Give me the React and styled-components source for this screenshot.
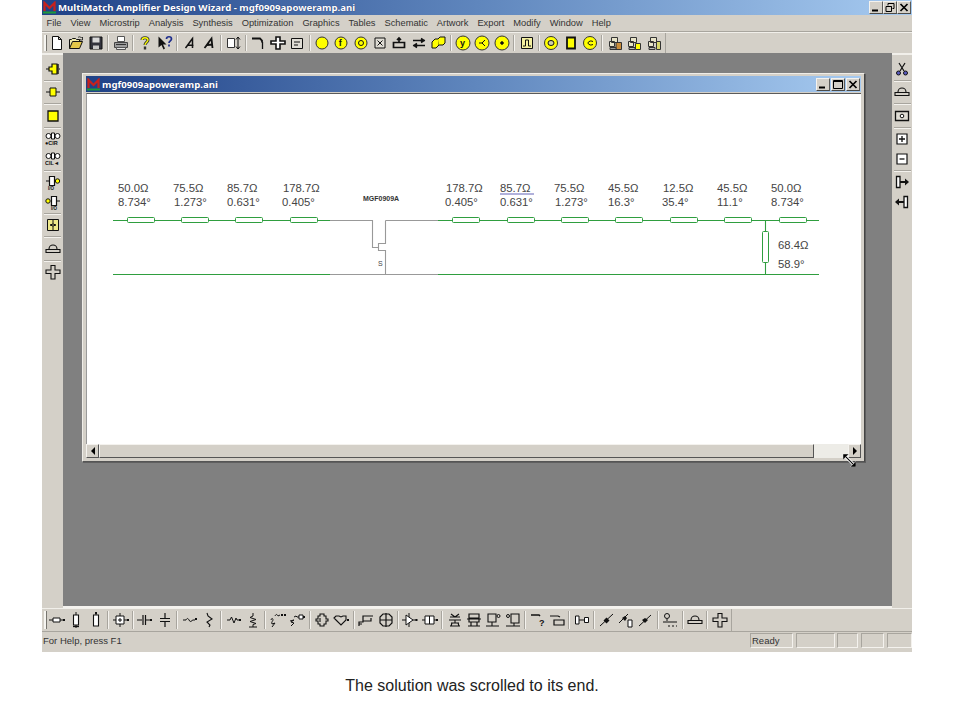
import React from "react";
import styled, { createGlobalStyle } from "styled-components";

const GlobalStyle = createGlobalStyle`
  html, body {
    margin: 0;
    padding: 0;
    background: #fff;
  }
`;

const Page = styled.div`
  width: 960px;
  height: 720px;
  overflow: hidden;
`;

const Frame = styled.div`
  width: 870px;
  height: 652px;
  margin-left: 42px;
  display: flex;
  flex-direction: column;
  background: #d4d0c8;
  font-family: "Liberation Sans", Arial, sans-serif;
  color: #222;
`;

const Caption = styled.p`
  margin: 26px 0 0;
  text-align: center;
  width: 944px;
  font: 16px/16px "Liberation Sans", Arial, sans-serif;
  color: #222;
`;

const TitleBar = styled.div`
  display: flex;
  align-items: center;
  flex: none;
  height: ${(p) => (p.$child ? 16 : 15)}px;
  padding: 0 1px 0 1px;
  background: linear-gradient(90deg, #1f4187 0%, #5f86bd 50%, #a6caf0 100%);
  color: #fff;
  font: bold 9.65px "Noto Sans", sans-serif;
  white-space: nowrap;
`;

const TitleText = styled.span`
  flex: 1;
  margin-left: 2px;
  text-shadow: 0 0 1px #1a2a60;
`;

const CaptionButtons = styled.div`
  display: flex;
  gap: ${(p) => (p.$gap ? p.$gap : 0)}px;
`;

const CaptionButton = styled.div`
  width: 14px;
  height: 13px;
  box-sizing: border-box;
  background: #d4d0c8;
  border: 1px solid;
  border-color: #f4f2ee #5a5a58 #4a4a48 #f4f2ee;
  display: flex;
  align-items: center;
  justify-content: center;
`;

const MenuBar = styled.div`
  display: flex;
  align-items: center;
  flex: none;
  height: 17px;
  padding-left: 0;
  border-bottom: 1px solid #a8a59e;
  box-sizing: border-box;
  font-size: 9.3px;
  color: #333;
`;

const MenuItem = styled.span`
  padding: 0 4.5px;
  white-space: nowrap;
`;

const HBar = styled.div`
  flex: none;
  height: ${(p) => p.$height}px;
  display: flex;
  align-items: center;
  box-sizing: border-box;
  border-top: 1px solid #f1efea;
`;

const HTools = styled.div`
  display: inline-flex;
  align-items: center;
  height: 100%;
  padding-left: 5.3px;
  padding-right: 2px;
  position: relative;
  border-right: 1px solid #a8a59e;
  &::before {
    content: "";
    position: absolute;
    left: 2px;
    top: 2px;
    bottom: 2px;
    width: 2px;
    background: #f6f5f1;
    border-right: 1px solid #77756f;
  }
`;

const VTools = styled.div`
  display: flex;
  flex-direction: column;
  align-items: center;
  padding-top: 4px;
  border-top: 2px solid #f1efea;
`;

const ToolBtn = styled.div`
  flex: none;
  width: ${(p) => (p.$vertical ? "100%" : "19.35px")};
  height: ${(p) => (p.$vertical ? "19.5px" : "19px")};
  display: flex;
  align-items: center;
  justify-content: center;
`;

const HSep = styled.div`
  flex: none;
  align-self: stretch;
  width: 1px;
  margin: 2px 1.75px;
  background: #a8a59e;
  border-right: 1px solid #f4f2ee;
`;

const VSep = styled.div`
  flex: none;
  width: 17px;
  height: 1px;
  margin: 1px 0;
  background: #a8a59e;
  border-bottom: 1px solid #f4f2ee;
`;

const Workspace = styled.div`
  flex: 1;
  min-height: 0;
  display: flex;
`;

const SideBar = styled.div`
  flex: none;
  width: ${(p) => p.$width}px;
  background: #d4d0c8;
`;

const MdiArea = styled.div`
  flex: 1;
  background: #808080;
  padding: 20px 27px 0 19px;
  border-bottom: 2px solid #f4f2ee;
  position: relative;
`;

const ChildWindow = styled.div`
  position: relative;
  height: 389px;
  box-sizing: border-box;
  display: flex;
  flex-direction: column;
  background: #d4d0c8;
  padding: 2px 3px 3px;
  border: 1px solid;
  border-color: #efede8 #444 #555 #efede8;
  box-shadow: 1px 1px 0 #5f5f5f;
`;

const Canvas = styled.div`
  flex: 1;
  min-height: 0;
  margin-top: 1px;
  background: #fff;
  border-top: 1px solid #5a5a5a;
  border-left: 1px solid #9a9a9a;
`;

const Schematic = styled.svg`
  display: block;
  width: 100%;
  height: 100%;
  font-family: "Liberation Sans", Arial, sans-serif;
`;

const Label = styled.text`
  font-size: 11.3px;
  fill: #444;
`;

const DeviceName = styled.text`
  font-size: 7px;
  font-weight: bold;
  fill: #333;
`;

const ScrollBar = styled.div`
  flex: none;
  height: 14px;
  display: flex;
  background: #edece7;
`;

const ScrollButton = styled.div`
  flex: none;
  width: 13px;
  box-sizing: border-box;
  background: #d4d0c8;
  border: 1px solid;
  border-color: #f4f2ee #555 #555 #f4f2ee;
  display: flex;
  align-items: center;
  justify-content: center;
`;

const ScrollThumb = styled.div`
  flex: none;
  width: 715px;
  box-sizing: border-box;
  background: #d4d0c8;
  border: 1px solid;
  border-color: #f4f2ee #555 #555 #f4f2ee;
`;

const ScrollSpacer = styled.div`
  flex: 1;
`;

const ArrowLeft = styled.div`
  border-style: solid;
  border-width: 4px 4px 4px 0;
  border-color: transparent #000 transparent transparent;
`;

const ArrowRight = styled.div`
  border-style: solid;
  border-width: 4px 0 4px 4px;
  border-color: transparent transparent transparent #000;
`;

const ResizeCursor = styled.svg`
  position: absolute;
  left: 760px;
  top: 380px;
  width: 13px;
  height: 13px;
`;

const StatusBar = styled.div`
  flex: none;
  height: 21px;
  box-sizing: border-box;
  display: flex;
  align-items: center;
  padding-bottom: 3px;
  border-top: 1px solid #a8a59e;
  font-size: 9.5px;
  color: #333;
`;

const StatusText = styled.span`
  flex: 1;
  padding-left: 1px;
`;

const StatusPane = styled.div`
  flex: none;
  width: ${(p) => p.$width}px;
  height: 15px;
  margin-left: ${(p) => p.$gap}px;
  box-sizing: border-box;
  padding-left: 1px;
  line-height: 13px;
  border: 1px solid;
  border-color: #a8a59e #f4f2ee #f4f2ee #a8a59e;
`;

const Logo = () => (
  <svg width="13" height="13" viewBox="0 0 13 13">
    <path d="M1.5 10V2L6.5 7L11.5 2V10" fill="none" stroke="#c8201c" strokeWidth="2.2" />
    <path d="M0 11.5h13" stroke="#1f9a3a" strokeWidth="2" />
  </svg>
);

const Min = () => (
  <svg width="10" height="9" viewBox="0 0 10 9">
    <path d="M1 7.5h6" stroke="#000" strokeWidth="2" />
  </svg>
);
const Restore = () => (
  <svg width="10" height="9" viewBox="0 0 10 9" fill="none" stroke="#000">
    <path d="M3 2.5V.5h6v5H7.5" />
    <path d="M1 3.5h5.5v5H1z M1 3.5h5.5" />
  </svg>
);
const Max = () => (
  <svg width="10" height="9" viewBox="0 0 10 9" fill="none" stroke="#000">
    <path d="M.5.5h9v8h-9z M.5 1.5h9" />
  </svg>
);
const CloseX = () => (
  <svg width="10" height="9" viewBox="0 0 10 9">
    <path d="M1.5 1l7 7M8.5 1l-7 7" stroke="#000" strokeWidth="1.7" />
  </svg>
);

const Y = "#ffff00";
const T = ({ x, y, s = 5, c, children }) => (
  <text x={x} y={y} fontSize={s} fill={c || "#111"} stroke="none" fontWeight="bold" fontFamily="Liberation Sans, sans-serif">
    {children}
  </text>
);
const Disc = ({ r = 6, children }) => (
  <>
    <circle cx="8" cy="8" r={r} fill={Y} stroke="#333" />
    {children}
  </>
);
const Dot = ({ x, y }) => <rect x={x} y={y} width="2" height="2" fill="#111" stroke="none" />;

const ICONS = {
  new: <path d="M3.5 1.5h6l3 3v10h-9z M9.5 1.5v3h3" fill="#fff" />,
  open: (
    <>
      <path d="M1.5 13.5v-9h2l1-1h3l1 1h3v2" fill="#efe9a8" />
      <path d="M1.5 13.5l3-7h10l-3 7z" fill="#e3c74a" />
      <path d="M10 2.5c1-1 2.500-1 3.500.5l1-1v3h-3l1-1" strokeWidth=".8" />
    </>
  ),
  save: (
    <>
      <path d="M2 2h12v12H2z" fill="#33333d" />
      <path d="M4.500 2.500h7v5h-7z" fill="#d8d8d8" stroke="none" />
      <path d="M5 10.500h6v3.500H5z" fill="#c8c8c8" stroke="none" />
    </>
  ),
  print: (
    <>
      <path d="M4.500 1.500h7v5h-7z" fill="#fff" stroke="#555" />
      <path d="M1.500 7.500h13v5h-13z" fill="#9c9c9c" stroke="#444" />
      <path d="M3.500 12.500h9v2h-9z" fill="#e8e8e8" stroke="#555" />
      <path d="M3 9.500h10" stroke="#333" />
    </>
  ),
  help: (
    <>
      <path d="M5 5c0-3 6-3 6 0 0 2-3 2.500-3 5" fill="none" stroke="#333" strokeWidth="3" />
      <path d="M5 5c0-3 6-3 6 0 0 2-3 2.500-3 5" fill="none" stroke={Y} strokeWidth="1.300" />
      <path d="M8 11.500v3" stroke="#333" strokeWidth="2.400" />
    </>
  ),
  whats: (
    <>
      <path d="M1.500 1.500v11l3-2.500 2 4.500 1.500-1-2-4h3.500z" fill="#111" stroke="none" />
      <path d="M9.500 4c0-3 5-3 5 0 0 1.800-2.500 2-2.500 4" fill="none" stroke="#1d2c8c" strokeWidth="1.700" />
      <path d="M12 9.500v2" stroke="#1d2c8c" strokeWidth="1.700" />
    </>
  ),
  a1: <path d="M3.500 13C6 10 8 6.500 10.500 3.500L10.500 13M6 10l5.500.5" fill="none" strokeWidth="1.500" />,
  a2: <path d="M3.500 13C6 10 8 6.500 10.500 3.500L11.500 13M6 10l6-.5" fill="none" strokeWidth="1.800" />,
  tune: (
    <>
      <path d="M1.500 3.500h7v9h-7z" fill="#fff" stroke="#333" />
      <path d="M12 2v12M10 4.500L12 2l2 2.500M10 11.500l2 2.500 2-2.500" fill="none" />
    </>
  ),
  bend: (
    <>
      <path d="M1 3.500h8l2 2v2" fill="none" strokeWidth="1.800" />
      <path d="M11.500 7v7" strokeWidth="1.300" />
    </>
  ),
  cross: <path d="M6 2h4v4h5v3h-5v5H6V9H1V6h5z" fill="#fff" strokeWidth="1.600" />,
  eframe: (
    <>
      <path d="M2.500 3.500h11v10h-11z" fill="#dfdcd4" />
      <path d="M5 7h6M5 10h4" />
    </>
  ),
  dot1: <Disc />,
  df: <Disc><T x="5.800" y="11" s="9">f</T></Disc>,
  dring: <Disc><circle cx="8" cy="8" r="2.500" fill="none" /></Disc>,
  boxx: (
    <>
      <path d="M3 3h10v10H3z" fill="#dfdcd4" />
      <path d="M5.500 5.500l5 5M10.500 5.500l-5 5" />
    </>
  ),
  plug: <path d="M2.500 7.500h11v5h-11z M8 7.500V3M6 5l2-2 2 2" fill="none" strokeWidth="1.700" />,
  swap: <path d="M2 5.500h12M10 3.500l3 2-3 2M14 10.500H2M6 8.500l-3 2 3 2" fill="none" strokeWidth="1.600" />,
  cubes: (
    <>
      <path d="M2 7l3-3h4v6l-3 3H2z" fill={Y} />
      <path d="M8 4l2-2h5v6l-2 2H9" fill={Y} />
    </>
  ),
  dy: <Disc r={7}><T x="5" y="11" s="9">y</T></Disc>,
  dk: <Disc r={7}><path d="M5 8h3l3-3M8 8l3 3" fill="none" /></Disc>,
  dc: <Disc r={7}><circle cx="8" cy="8" r="1.300" fill="#111" /></Disc>,
  pulse: (
    <>
      <path d="M2.500 2.500h11v11h-11z" fill="#f4f0a0" />
      <path d="M4 11h2.500V5h3v6H12" fill="none" />
    </>
  ),
  g1: <Disc r={6.500}><ellipse cx="8" cy="8" rx="3" ry="2.500" fill="#cfcfa8" /></Disc>,
  rectY: <path d="M4 2.500h8v11H4z" fill={Y} strokeWidth="1.800" />,
  g3: <Disc r={6.500}><path d="M11 6.500a3 2 0 1 0 0 3" fill="none" /></Disc>,
  stack1: (
    <>
      <path d="M4.500 2.500h6v5h-6zM2.500 6.500h5v5h-5z" fill="#e8e4c8" stroke="#333" />
      <path d="M9 7.500h5.500v7H9z" fill="#c98c3a" stroke="#333" />
      <path d="M3 12.500h6v2H3z" fill="#999" stroke="#333" />
    </>
  ),
  stack2: (
    <>
      <path d="M4.500 2.500h6v5h-6zM2.500 6.500h5v5h-5z" fill="#e8e4c8" stroke="#333" />
      <path d="M9.500 8.500h5v6h-5z" fill={Y} stroke="#333" />
      <path d="M3 12.500h6v2H3z" fill="#bbb" stroke="#333" />
    </>
  ),
  stack3: (
    <>
      <path d="M4.500 2.500h6v5h-6zM2.500 6.500h5v5h-5z" fill="#e8e4c8" stroke="#333" />
      <path d="M10.500 6.500h4v8h-4z" fill="#d8d86a" stroke="#333" />
      <path d="M3 12.500h6v2H3z" fill="#bbb" stroke="#333" />
    </>
  ),

  // left bar
  lport: (
    <>
      <path d="M1 8h3M14 8h1" />
      <path d="M7 3h5v10H7V10H4V6h3z" fill={Y} strokeWidth="1.200" />
      <path d="M13 3v10" strokeWidth="1.400" />
    </>
  ),
  lmid: (
    <>
      <path d="M1 8h4M11 8h4" strokeWidth="1.200" />
      <path d="M5 4h6v8H5z" fill={Y} />
    </>
  ),
  square: <path d="M3 3h10v10H3z" fill={Y} strokeWidth="1.300" />,
  cir: (
    <>
      <circle cx="3.500" cy="5" r="2.500" fill="#fff" />
      <path d="M6 5h4" />
      <path d="M6.500 2h3v6h-3z" fill="#fff" />
      <circle cx="12.500" cy="5" r="2.500" fill="#fff" />
      <T x="0" y="14" s="5.500">●CIR</T>
    </>
  ),
  cil: (
    <>
      <circle cx="3.500" cy="5" r="2.500" fill="#fff" />
      <path d="M6.500 2h3v6h-3z" fill="#fff" />
      <circle cx="12.500" cy="5" r="2.500" fill="#fff" />
      <T x="0" y="14" s="5.500">CIL◄</T>
    </>
  ),
  rport: (
    <>
      <path d="M1 7h3" />
      <path d="M4.500 2.500h5v9h-5z" fill="#fff" strokeWidth="1.200" />
      <circle cx="12.500" cy="7" r="2.200" fill={Y} />
      <T x="3" y="16" s="4.500">I/O</T>
    </>
  ),
  lport2: (
    <>
      <circle cx="3" cy="7" r="2.200" fill={Y} />
      <path d="M6.500 2.500h5v9h-5z" fill="#fff" strokeWidth="1.200" />
      <path d="M12 7h3" />
      <T x="6" y="16" s="4.500">I/O</T>
    </>
  ),
  split: (
    <>
      <path d="M2.500 2.500h11v11h-11z" fill="#efe98a" />
      <path d="M8 3v4l-3 1 3 1v4M8 7l3 1-3 1" fill="none" />
    </>
  ),
  hat: <path d="M4 8a4 4 0 0 1 8 0M1 8.500h14v3H1z" fill="none" strokeWidth="1.100" />,
  plus: <path d="M6 1.500h4V6h5v3.500h-5V15H6V9.500H1V6h5z" fill="none" strokeWidth="1.100" />,

  // right bar
  scissors: (
    <>
      <path d="M5 2l5 8M11 2L6 10" strokeWidth="1.200" />
      <circle cx="4.500" cy="12" r="2" fill="#5a5ac0" />
      <circle cx="11.500" cy="12" r="2" fill="#5a5ac0" />
    </>
  ),
  target: (
    <>
      <path d="M1.500 3.500h13v9h-13z" fill="#dfdcd4" strokeWidth="1.300" />
      <circle cx="8" cy="8" r="1.800" fill="#fff" />
    </>
  ),
  boxPlus: (
    <>
      <path d="M3 3h10v10H3z" fill="#fff" strokeWidth="1.200" />
      <path d="M5 8h6M8 5v6" strokeWidth="1.300" />
    </>
  ),
  boxMinus: (
    <>
      <path d="M3 3h10v10H3z" fill="#fff" strokeWidth="1.200" />
      <path d="M5.500 8h5" strokeWidth="1.300" />
    </>
  ),
  toRight: (
    <>
      <path d="M2.500 2.500h3.500v11H2.500z" fill="#fff" strokeWidth="1.300" />
      <path d="M6 8h6" strokeWidth="2" />
      <path d="M11 4.500L15 8l-4 3.500z" fill="#111" stroke="none" />
    </>
  ),
  toLeft: (
    <>
      <path d="M10 2.500h3.500v11H10z" fill="#fff" strokeWidth="1.300" />
      <path d="M4 8h6" strokeWidth="2" />
      <path d="M5 4.500L1 8l4 3.500z" fill="#111" stroke="none" />
    </>
  ),

  // bottom bar
  tline: (
    <>
      <path d="M0 8h4M11 8h3" strokeWidth="1.200" />
      <path d="M4 6h7v4H4z" fill="#fff" />
      <Dot x="14" y="7" />
    </>
  ),
  vbox: (
    <>
      <path d="M8 0v3M8 13v3" />
      <path d="M5.500 3h5v10h-5z" fill="#fff" strokeWidth="1.100" />
      <path d="M5 14.500h6" strokeWidth="1.300" />
    </>
  ),
  vopen: (
    <>
      <path d="M8 0v3" />
      <path d="M5.500 3h5v11h-5z" fill="#fff" strokeWidth="1.100" />
      <Dot x="7" y="0" />
    </>
  ),
  boxT: (
    <>
      <path d="M0 8h3M11 8h3M7 1v3M7 12v3" />
      <path d="M3 4h8v8H3z" fill="#fff" />
      <path d="M5 8h4M7 6v4" />
      <Dot x="14" y="7" />
    </>
  ),
  capH: (
    <>
      <path d="M0 8h5M9 8h5" />
      <path d="M6 3v10M8.500 3v10" strokeWidth="1.200" />
      <Dot x="13" y="7" />
    </>
  ),
  capV: <path d="M8 1v5M8 10v5M3 6.500h10M3 9.500h10" strokeWidth="1.200" fill="none" />,
  indH: (
    <>
      <path d="M1 8h3c1-2 2-2 3 0 .8 2 2.500 2 3.500 0H13" fill="none" />
      <Dot x="13" y="6" />
    </>
  ),
  indV: (
    <path d="M6 1l1 3 4 3-5 3 3 3-1 2" fill="none" strokeWidth="1.100" />
  ),
  resH: (
    <>
      <path d="M1 8h3l1.500-3L8 11l2-5 1 2h2" fill="none" />
      <Dot x="13" y="7" />
    </>
  ),
  resV: <path d="M8 1v3l-3 1.500 6 2-6 2 6 2L8 12.500V15M4 15h8" fill="none" />,
  lc1: (
    <>
      <path d="M1 8c1-3 2-1 2 0s-2 2-1 4l3-1-3 4M5 4c1-2 2-2 3 0l2-1" fill="none" />
      <Dot x="11" y="2" /><Dot x="14" y="2" />
    </>
  ),
  lc2: (
    <>
      <path d="M1 9l4-1-3 2 3 1-3 3M5 5l2-1 1 1h3" fill="none" />
      <path d="M10 3h4v4h-4z" fill="#fff" />
      <Dot x="14" y="4" />
    </>
  ),
  gear1: <path d="M6 2h4v2h2v3h2v2h-2v3h-2v2H6v-2H4V9H2V7h2V4h2z M6 6v4" fill="none" strokeWidth="1.100" />,
  heart: (
    <>
      <path d="M1 6l2-2h3l2 1 2-1h3v4l-5 5-5-5z" fill="none" strokeWidth="1.100" />
      <Dot x="14" y="7" />
    </>
  ),
  bend2: <path d="M1 14v-4h4V4h10M5 9h8V6M1 12h3" fill="none" strokeWidth="1.200" />,
  oct: (
    <>
      <path d="M5 2h6l3 3v6l-3 3H5l-3-3V5z M2 8h12M8 1v14" fill="none" strokeWidth="1.200" />
    </>
  ),
  diode: (
    <>
      <path d="M0 8h4M11 8h3M7 1v14" />
      <path d="M4 3v10l7-5z" fill="#fff" />
      <Dot x="13.500" y="7" />
    </>
  ),
  mid: (
    <>
      <path d="M0 8h3M12 8h2" />
      <path d="M3 4h9v8H3zM7.500 4v8" fill="#fff" />
      <Dot x="14" y="7" />
    </>
  ),
  stacked: <path d="M3 5h10M4 2l4 3 4-3M2 8h12M8 8v3M4 11h8M3 14h10M5 11l-1 3M11 11l1 3" fill="none" strokeWidth="1.100" />,
  desk: <path d="M3 2h10v4H3zM1 7h14M3 7v3h10V7M5 10v4M11 10v4M2 14h12" fill="none" strokeWidth="1.200" />,
  tee1: (
    <>
      <path d="M3 2h8v8H3zM7 10v4M1 14h13" fill="none" strokeWidth="1.100" />
      <circle cx="13.500" cy="4" r="1.500" fill="none" />
    </>
  ),
  tee2: (
    <>
      <path d="M6 2h8v9H6zM9 11v3M1 14h14" fill="none" strokeWidth="1.100" />
      <circle cx="3" cy="4" r="1.500" fill="none" />
    </>
  ),
  q: (
    <>
      <path d="M1 3h8l1 1" fill="none" strokeWidth="1.500" />
      <T x="9" y="14" s="9">?</T>
    </>
  ),
  rbox: <path d="M1 4h8l2 1M5 8h10v5H5z" fill="none" strokeWidth="1.200" />,
  link: (
    <>
      <path d="M1.500 4h3.500v8H1.500z" fill="#fff" />
      <path d="M5 8h5" />
      <path d="M10.500 5.500h4v5h-4z" fill="#fff" />
    </>
  ),
  diag: (
    <>
      <path d="M1 14L14 2" />
      <path d="M4.500 8.500l3 3 3-3-3-3z" fill="#111" stroke="none" />
    </>
  ),
  diagBox: (
    <>
      <path d="M1 11l9-9" />
      <path d="M4 6l3 3 2-3-2-2z" fill="#111" stroke="none" />
      <path d="M10 8h4v7h-4z" fill="#fff" />
    </>
  ),
  diag2: (
    <>
      <path d="M2 14L14 3" />
      <path d="M5 8l3 3 3-3-3-2z" fill="#111" stroke="none" />
    </>
  ),
  probe: (
    <>
      <circle cx="5" cy="4" r="2.500" fill="none" />
      <path d="M5 7v2M1 10h14M6 14h2M10 14h2M14 14h1" fill="none" />
    </>
  ),
};

const Glyph = ({ name }) => (
  <svg width="16" height="16" viewBox="0 0 16 16" fill="none" stroke="#111" strokeWidth="1">
    {ICONS[name]}
  </svg>
);

const renderTools = (list, vertical) =>
  list.split(" ").map((name, i) => {
    if (name === "|") return vertical ? <VSep key={i} /> : <HSep key={i} />;
    return (
      <ToolBtn key={i} $vertical={vertical}>
        <Glyph name={name} />
      </ToolBtn>
    );
  });

const TOP_TOOLS =
  "new open save | print | help whats | a1 a2 | tune | bend cross eframe | dot1 df dring boxx plug swap cubes | dy dk dc | pulse | g1 rectY g3 | stack1 stack2 stack3";
const LEFT_TOOLS = "lport | lmid | square | cir cil | rport lport2 | split | hat | plus";
const RIGHT_TOOLS = "scissors | hat | target | boxPlus boxMinus | toRight toLeft";
const BOTTOM_TOOLS =
  "tline vbox vopen | boxT | capH capV | indH indV | resH resV | lc1 lc2 | gear1 heart | bend2 oct | diode mid | stacked desk tee1 tee2 | q rbox | link | diag diagBox diag2 | probe | hat | plus";

const MENUS = [
  "File", "View", "Microstrip", "Analysis", "Synthesis", "Optimization", "Graphics",
  "Tables", "Schematic", "Artwork", "Export", "Modify", "Window", "Help",
];

const GREEN = "#2f9e3f";
const GREY = "#999";

const TOP_RESISTORS = [127, 181, 235, 290, 452, 507, 561, 615, 670, 724, 779];

const LABELS = [
  [118, 118, "50.0Ω", "8.734°"],
  [173, 174, "75.5Ω", "1.273°"],
  [227, 227, "85.7Ω", "0.631°"],
  [283, 282, "178.7Ω", "0.405°"],
  [446, 445, "178.7Ω", "0.405°"],
  [500, 500, "85.7Ω", "0.631°"],
  [554, 555, "75.5Ω", "1.273°"],
  [608, 608, "45.5Ω", "16.3°"],
  [663, 662, "12.5Ω", "35.4°"],
  [717, 717, "45.5Ω", "11.1°"],
  [771, 771, "50.0Ω", "8.734°"],
];

const Circuit = () => (
  <Schematic viewBox="87 94 774 350" preserveAspectRatio="xMinYMin slice">
    <g fill="none" strokeWidth="1.100">
      <path d="M113 220.500H330M438 220.500H819M113 274.500H330M438 274.500H819M765.500 220V274" stroke={GREEN} />
      <path
        d="M330 220.500H372.500V247.500H378.500V250.500H385.500V274.500M385.500 220.500V243.500H378.500V247.500M385.500 220.500H438M330 274.500H438"
        stroke={GREY}
      />
    </g>
    {TOP_RESISTORS.map((x) => (
      <rect key={x} x={x + 0.5} y="217.500" width="27" height="5" rx="1" fill="#fff" stroke={GREEN} />
    ))}
    <rect x="762.500" y="231.500" width="6" height="31" rx="1" fill="#fff" stroke={GREEN} />
    <path d="M500 194h34" stroke="#6464b8" strokeWidth="1.200" />
    {LABELS.map(([x1, x2, z, deg], i) => (
      <g key={i}>
        <Label x={x1} y="192">{z}</Label>
        <Label x={x2} y="205.500">{deg}</Label>
      </g>
    ))}
    <Label x="778" y="249">68.4Ω</Label>
    <Label x="778" y="268">58.9°</Label>
    <DeviceName x="363" y="200.500">MGF0909A</DeviceName>
    <text x="378" y="266" fontSize="7" fill="#444">S</text>
  </Schematic>
);

export default function App() {
  return (
    <Page>
      <GlobalStyle />
      <Frame>
        <TitleBar>
          <Logo />
          <TitleText>MultiMatch Amplifier Design Wizard - mgf0909apoweramp.ani</TitleText>
          <CaptionButtons>
            <CaptionButton><Min /></CaptionButton>
            <CaptionButton><Restore /></CaptionButton>
            <CaptionButton><CloseX /></CaptionButton>
          </CaptionButtons>
        </TitleBar>
        <MenuBar>
          {MENUS.map((m) => (
            <MenuItem key={m}>{m}</MenuItem>
          ))}
        </MenuBar>
        <HBar $height={21}>
          <HTools>{renderTools(TOP_TOOLS)}</HTools>
        </HBar>
        <Workspace>
          <SideBar $width={21}>
            <VTools>{renderTools(LEFT_TOOLS, true)}</VTools>
          </SideBar>
          <MdiArea>
            <ChildWindow>
              <TitleBar $child>
                <Logo />
                <TitleText>mgf0909apoweramp.ani</TitleText>
                <CaptionButtons $gap={1}>
                  <CaptionButton><Min /></CaptionButton>
                  <CaptionButton><Max /></CaptionButton>
                  <CaptionButton><CloseX /></CaptionButton>
                </CaptionButtons>
              </TitleBar>
              <Canvas>
                <Circuit />
              </Canvas>
              <ScrollBar>
                <ScrollButton><ArrowLeft /></ScrollButton>
                <ScrollThumb />
                <ScrollSpacer />
                <ScrollButton><ArrowRight /></ScrollButton>
              </ScrollBar>
              <ResizeCursor viewBox="0 0 18 18">
                <path d="M3 3l12 12" stroke="#fff" strokeWidth="4" />
                <path d="M3 3l12 12" stroke="#000" strokeWidth="1.500" />
                <path d="M0 0h8L0 8z M18 18h-8l8-8z" fill="#000" stroke="#fff" strokeWidth=".6" />
              </ResizeCursor>
            </ChildWindow>
          </MdiArea>
          <SideBar $width={20}>
            <VTools>{renderTools(RIGHT_TOOLS, true)}</VTools>
          </SideBar>
        </Workspace>
        <HBar $height={23}>
          <HTools>{renderTools(BOTTOM_TOOLS)}</HTools>
        </HBar>
        <StatusBar>
          <StatusText>For Help, press F1</StatusText>
          <StatusPane $width={43} $gap={0}>Ready</StatusPane>
          <StatusPane $width={39} $gap={3} />
          <StatusPane $width={21} $gap={2} />
          <StatusPane $width={23} $gap={3} />
          <StatusPane $width={25} $gap={3} />
        </StatusBar>
      </Frame>
      <Caption>The solution was scrolled to its end.</Caption>
    </Page>
  );
}
